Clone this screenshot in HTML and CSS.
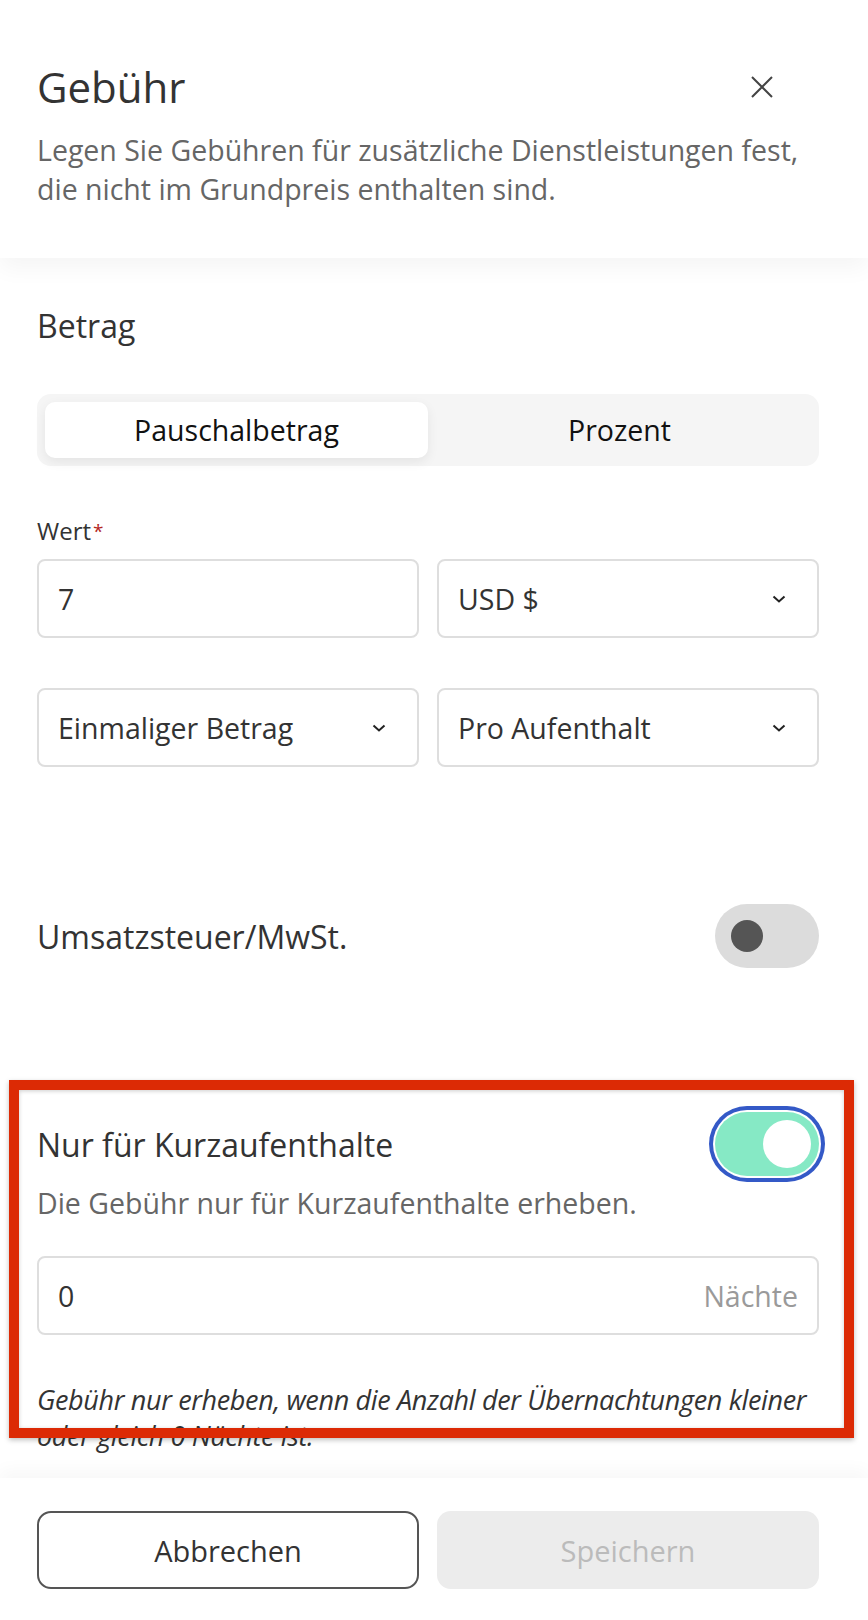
FILE: index.html
```html
<!doctype html>
<html lang="de">

<head>
    <meta charset="UTF-8" />
    <meta name="viewport" content="width=device-width, initial-scale=1.0" />
    <title>Gebühr</title>
    <link rel="stylesheet" href="styles.css">
</head>

<body>
    <div class="sheet">
        <header class="sheet-header">
            <div class="title-row">
                <h1>Gebühr</h1>
                <button class="close-btn" type="button" aria-label="Schließen">
                    <svg width="22" height="22" viewBox="0 0 22 22">
                        <path d="M1 1L21 21M21 1L1 21" stroke="#444" stroke-width="2" fill="none" />
                    </svg>
                </button>
            </div>
            <p class="subtitle">
                Legen Sie Gebühren für zusätzliche Dienstleistungen fest,
                die nicht im Grundpreis enthalten sind.
            </p>
        </header>

        <main class="sheet-body">
            <h2 class="section-title">Betrag</h2>

            <div class="segmented">
                <button class="segment active" type="button">Pauschalbetrag</button>
                <button class="segment" type="button">Prozent</button>
            </div>

            <div class="field-label">Wert<span class="required">*</span></div>
            <div class="field-row">
                <div class="field">7</div>
                <div class="field select">
                    <span>USD $</span>
                    <svg class="chevron" width="14" height="8" viewBox="0 0 14 8">
                        <path d="M1.5 1.5L7 6.5L12.5 1.5" stroke="#222" stroke-width="2" fill="none" />
                    </svg>
                </div>
            </div>

            <div class="field-row second">
                <div class="field select">
                    <span>Einmaliger Betrag</span>
                    <svg class="chevron" width="14" height="8" viewBox="0 0 14 8">
                        <path d="M1.5 1.5L7 6.5L12.5 1.5" stroke="#222" stroke-width="2" fill="none" />
                    </svg>
                </div>
                <div class="field select">
                    <span>Pro Aufenthalt</span>
                    <svg class="chevron" width="14" height="8" viewBox="0 0 14 8">
                        <path d="M1.5 1.5L7 6.5L12.5 1.5" stroke="#222" stroke-width="2" fill="none" />
                    </svg>
                </div>
            </div>

            <div class="switch-row tax-row">
                <span>Umsatzsteuer/MwSt.</span>
                <span class="switch"><span class="knob"></span></span>
            </div>

            <section class="short-stay">
                <div class="switch-row">
                    <span>Nur für Kurzaufenthalte</span>
                    <span class="switch on"><span class="knob"></span></span>
                </div>
                <p class="hint">Die Gebühr nur für Kurzaufenthalte erheben.</p>
                <div class="field suffix">
                    <span>0</span>
                    <span class="unit">Nächte</span>
                </div>
                <p class="note">
                    Gebühr nur erheben, wenn die Anzahl der Übernachtungen kleiner
                    oder gleich 0 Nächte ist.
                </p>
            </section>
        </main>

        <footer class="sheet-footer">
            <button class="btn btn-outline" type="button">Abbrechen</button>
            <button class="btn btn-disabled" type="button" disabled>Speichern</button>
        </footer>

        <div class="highlight"></div>
    </div>
</body>

</html>
```

FILE: styles.css
```css
:root {
    --text-color: #333;
    --muted-color: #666;
    --border-color: #dedede;
    --accent-red: #dc2a05;
    --content-left: 37px;
    --content-right: 49px;
}

* {
    margin: 0;
    padding: 0;
    box-sizing: border-box;
    font-family: "Open Sans", "Noto Sans", sans-serif;
}

body {
    background-color: white;
    color: var(--text-color);
}

button {
    border: none;
    background: none;
    font: inherit;
    color: inherit;
}

.sheet {
    position: relative;
    height: 1620px;
    display: flex;
    flex-direction: column;
    overflow: hidden;
}

/* header */

.sheet-header {
    position: relative;
    z-index: 2;
    background-color: white;
    padding: 61px var(--content-right) 49px var(--content-left);
    box-shadow: 0 10px 22px rgba(0, 0, 0, 0.045);
}

.title-row {
    display: flex;
    justify-content: space-between;
    align-items: center;
    height: 52px;
}

h1 {
    font-size: 42px;
    line-height: 52px;
    font-weight: 400;
    color: #333;
}

.close-btn {
    width: 46px;
    height: 46px;
    margin-right: 34px;
    display: flex;
    justify-content: center;
    align-items: center;
}

.subtitle {
    margin-top: 18px;
    font-size: 28.5px;
    line-height: 39px;
    color: var(--muted-color);
}

/* body */

.sheet-body {
    flex: 1;
    overflow: hidden;
    padding: 46px var(--content-right) 0 var(--content-left);
}

.section-title {
    font-size: 32px;
    line-height: 44px;
    font-weight: 400;
    margin-bottom: 46px;
}

.segmented {
    display: grid;
    grid-template-columns: 1fr 1fr;
    height: 72px;
    padding: 8px;
    background-color: #f5f5f5;
    border-radius: 14px;
    margin-bottom: 49px;
}

.segment {
    font-size: 28.5px;
    line-height: 56px;
    color: #111;
    border-radius: 10px;
}

.segment.active {
    background-color: white;
    box-shadow: 0 4px 12px rgba(0, 0, 0, 0.07);
}

.field-label {
    font-size: 24px;
    line-height: 32px;
    margin-bottom: 12px;
}

.required {
    color: #b3261e;
    font-size: 19px;
    vertical-align: top;
    margin-left: 2px;
}

.field-row {
    display: grid;
    grid-template-columns: 1fr 1fr;
    gap: 18px;
}

.field-row.second {
    margin-top: 50px;
}

.field {
    height: 79px;
    border: 2px solid var(--border-color);
    border-radius: 8px;
    padding: 0 19px;
    font-size: 28.5px;
    display: flex;
    align-items: center;
    color: #333;
}

.field.select {
    justify-content: space-between;
    padding-right: 31px;
}

.field.suffix {
    justify-content: space-between;
    margin-top: 33px;
}

.unit {
    color: #9a9a9a;
}

.switch-row {
    display: flex;
    justify-content: space-between;
    align-items: center;
    height: 64px;
    font-size: 32px;
}

.tax-row {
    margin-top: 137px;
}

.switch {
    width: 104px;
    height: 64px;
    border-radius: 32px;
    background-color: #dcdcdc;
    display: flex;
    align-items: center;
    padding-left: 16px;
}

.switch .knob {
    width: 32px;
    height: 32px;
    border-radius: 50%;
    background-color: #555;
}

.switch.on {
    background-color: #86e9c5;
    justify-content: flex-end;
    padding: 0 8px 0 0;
    box-shadow: 0 0 0 2px white, 0 0 0 6px #3459c7;
}

.switch.on .knob {
    width: 48px;
    height: 48px;
    background-color: white;
}

.short-stay {
    margin-top: 144px;
}

.hint {
    margin-top: 7px;
    font-size: 28.5px;
    line-height: 40px;
    color: var(--muted-color);
}

.note {
    margin-top: 47px;
    font-size: 27px;
    line-height: 36px;
    letter-spacing: -0.35px;
    font-style: italic;
    color: #333;
}

/* footer */

.sheet-footer {
    position: relative;
    z-index: 2;
    background-color: white;
    display: grid;
    grid-template-columns: 1fr 1fr;
    gap: 18px;
    padding: 33px var(--content-right) 31px var(--content-left);
    box-shadow: 0 -8px 16px rgba(0, 0, 0, 0.03);
}

.btn {
    height: 78px;
    border-radius: 14px;
    font-size: 29px;
}

.btn-outline {
    border: 2px solid #555;
    color: #333;
}

.btn-disabled {
    background-color: #ececec;
    color: #bbb;
}

/* annotation frame over the short-stay section */

.highlight {
    position: absolute;
    left: 9px;
    top: 1080px;
    width: 845px;
    height: 358px;
    border: 10px solid var(--accent-red);
    box-shadow: 0 2px 5px rgba(0, 0, 0, 0.25), inset 0 1px 4px rgba(0, 0, 0, 0.2);
    z-index: 3;
    pointer-events: none;
}
```
